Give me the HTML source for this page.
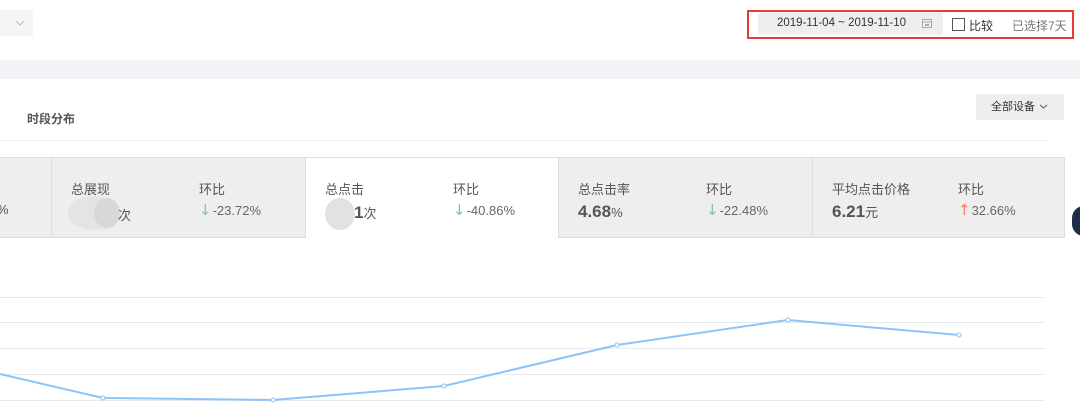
<!DOCTYPE html>
<html><head><meta charset="utf-8"><style>
*{margin:0;padding:0;box-sizing:border-box}
body{width:1080px;height:407px;background:#fff;position:relative;overflow:hidden;font-family:"Liberation Sans","Noto Sans CJK SC",sans-serif;color:#333}
.abs{position:absolute}
.card{position:absolute;top:157px;height:81px;border:1px solid #ddd;background:#eee}
.lbl{position:absolute;font-size:13px;color:#555;top:21px}
.val{position:absolute;top:44px;font-size:13px;color:#555}
.big{font-size:17px;font-weight:bold;color:#555}
.chg{position:absolute;top:43px;font-size:13px;color:#666}
.dn,.up{font-family:"DejaVu Sans",sans-serif;font-size:15px;display:inline-block;margin-right:1px}
.dn{color:#7cc9a8}.up{color:#f27b6a}
.blur{position:absolute;border-radius:50%;background:#ddd}
</style></head><body>
<div class="abs" style="left:0;top:10px;width:33px;height:26px;background:#f5f5f5"></div>
<svg class="abs" style="left:15px;top:19px" width="10" height="8"><path d="M1 2 L5 6 L9 2" stroke="#bbb" fill="none"/></svg>

<div class="abs" style="left:747px;top:10px;width:327px;height:29px;border:2px solid #e83a3a"></div>
<div class="abs" style="left:758px;top:13px;width:185px;height:22px;background:#eee"></div>
<div class="abs" style="left:777px;top:17px;font-size:11.5px;color:#333">2019-11-04 ~ 2019-11-10</div>
<svg class="abs" style="left:921px;top:17px" width="12" height="12"><rect x="1.5" y="2.5" width="9" height="8" fill="none" stroke="#aaa"/><line x1="1.5" y1="5" x2="10.5" y2="5" stroke="#aaa"/><rect x="4" y="7" width="4" height="2" fill="#aaa"/></svg>
<div class="abs" style="left:952px;top:18px;width:13px;height:13px;border:1px solid #555;background:#fff"></div>
<div class="abs" style="left:969px;top:17px;font-size:12px;color:#333">比较</div>
<div class="abs" style="left:1012px;top:17px;font-size:12px;color:#777">已选择7天</div>

<div class="abs" style="left:0;top:60px;width:1080px;height:19px;background:#f2f3f6"></div>

<div class="abs" style="left:27px;top:110px;font-size:12px;font-weight:bold;color:#555">时段分布</div>
<div class="abs" style="left:976px;top:94px;width:88px;height:26px;background:#eee;font-size:11px;color:#333;line-height:26px;padding-left:15px">全部设备</div>
<svg class="abs" style="left:1039px;top:103px" width="9" height="7"><path d="M1 2 L4.5 5 L8 2" stroke="#555" fill="none"/></svg>
<div class="abs" style="left:0;top:140px;width:1048px;height:1px;background:#eee"></div>

<div class="card" style="left:-2px;width:54px"><div class="val" style="left:-2px;top:44px">%</div></div>
<div class="card" style="left:51px;width:255px">
 <div class="lbl" style="left:19px">总展现</div>
 <div class="blur" style="left:16px;top:38px;width:52px;height:34px;background:#e4e4e4"></div>
 <div class="blur" style="left:42px;top:40px;width:26px;height:30px;background:#d8d8d8"></div>
 <div class="val" style="left:66px;top:47px">次</div>
 <div class="lbl" style="left:147px">环比</div>
 <div class="chg" style="left:147px"><span class="dn">↓</span>-23.72%</div>
</div>
<div class="card" style="left:305px;width:254px;background:#fff;border-bottom:none">
 <div class="lbl" style="left:19px">总点击</div>
 <div class="blur" style="left:19px;top:40px;width:30px;height:32px;background:#e2e2e2"></div>
 <div class="val" style="left:48px;top:45px"><span class="big">1</span>次</div>
 <div class="lbl" style="left:147px">环比</div>
 <div class="chg" style="left:147px"><span class="dn">↓</span>-40.86%</div>
</div>
<div class="card" style="left:558px;width:255px">
 <div class="lbl" style="left:19px">总点击率</div>
 <div class="val" style="left:19px;top:44px"><span class="big">4.68</span>%</div>
 <div class="lbl" style="left:147px">环比</div>
 <div class="chg" style="left:147px"><span class="dn">↓</span>-22.48%</div>
</div>
<div class="card" style="left:812px;width:253px">
 <div class="lbl" style="left:19px">平均点击价格</div>
 <div class="val" style="left:19px;top:44px"><span class="big">6.21</span>元</div>
 <div class="lbl" style="left:145px">环比</div>
 <div class="chg" style="left:145px"><span class="up">↑</span>32.66%</div>
</div>
<div class="abs" style="left:1072px;top:206px;width:24px;height:30px;border-radius:12px;background:#1f2d4d"></div>

<svg class="abs" style="left:0;top:0" width="1080" height="407">
 <g stroke="#e8eaf2" stroke-width="1">
  <line x1="0" y1="297.5" x2="1045" y2="297.5"/><line x1="0" y1="322.5" x2="1045" y2="322.5"/>
  <line x1="0" y1="348.5" x2="1045" y2="348.5"/><line x1="0" y1="374.5" x2="1045" y2="374.5"/>
  <line x1="0" y1="400.5" x2="1045" y2="400.5"/>
 </g>
 <polyline points="0,374 103,398 273,400 444,386 617,345 788,320 959,335" fill="none" stroke="#8ec3f7" stroke-width="2"/>
 <g fill="#fff" stroke="#8ec3f7" stroke-width="1">
  <circle cx="103" cy="398" r="2"/><circle cx="273" cy="400" r="2"/><circle cx="444" cy="386" r="2"/>
  <circle cx="617" cy="345" r="2"/><circle cx="788" cy="320" r="2"/><circle cx="959" cy="335" r="2"/>
 </g>
</svg>
</body></html>
